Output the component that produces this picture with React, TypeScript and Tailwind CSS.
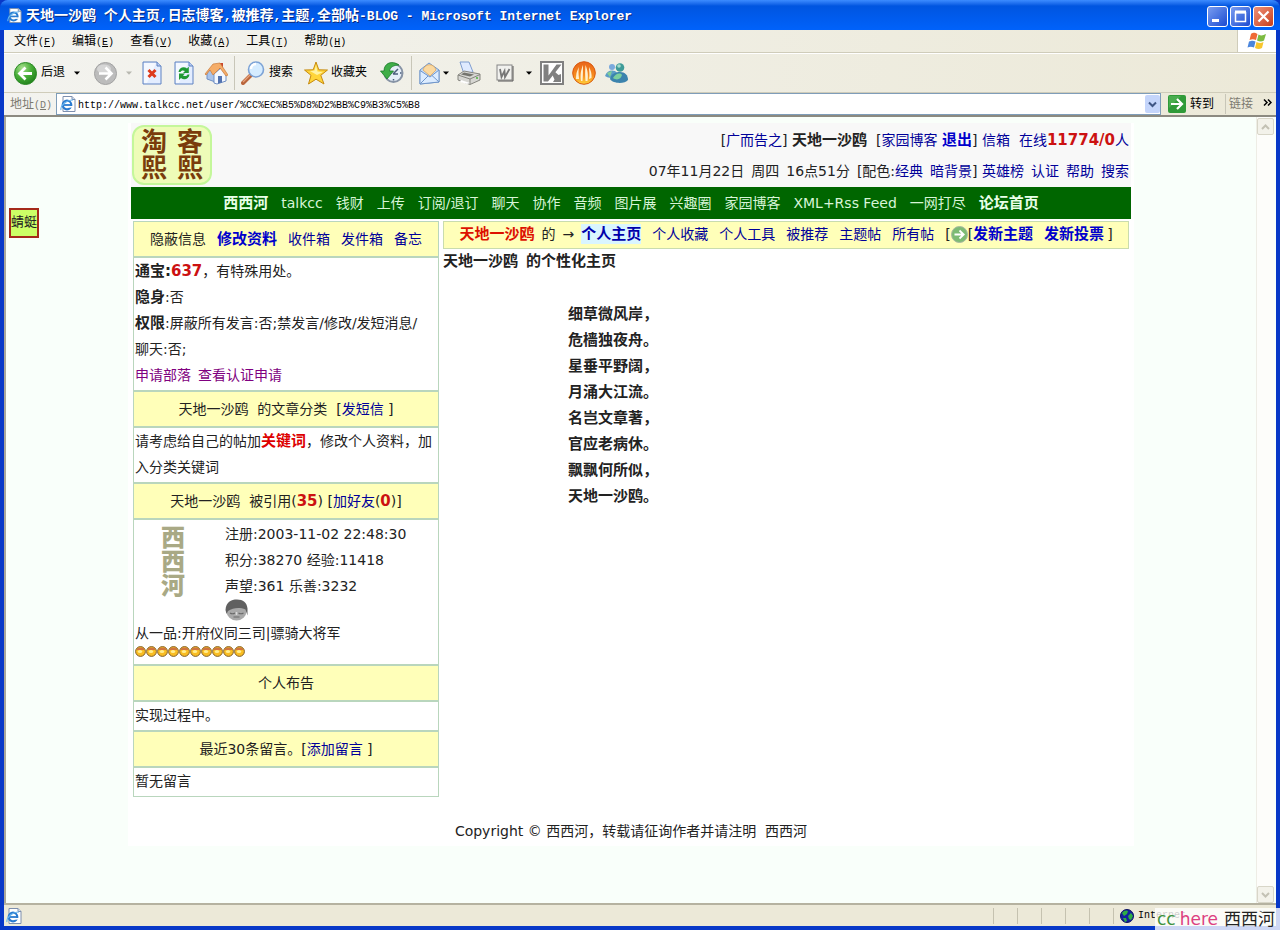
import React from "react";

type Kids = { children?: React.ReactNode };

function A({ children, className = "text-[#000099]" }: Kids & { className?: string }) {
  return (
    <a href="#" className={className}>
      {children}
    </a>
  );
}

function BoldA({ children }: Kids) {
  return (
    <a href="#" className="text-[15px] font-bold text-[#0000cc]">
      {children}
    </a>
  );
}

function B({ children, className = "" }: Kids & { className?: string }) {
  return <b className={`text-[15px] font-bold ${className}`}>{children}</b>;
}

function Num({ children }: Kids) {
  return <b className="text-[15px] font-bold text-[#cc1111]">{children}</b>;
}

function IEIcon({ size = 16 }: { size?: number }) {
  return (
    <svg width={size} height={size} viewBox="0 0 16 16" className="shrink-0">
      <path d="M3 .5h9l3 3v12H3z" fill="#fff" stroke="#7d8fae" />
      <path d="M12 .5v3h3" fill="#cfdcf0" stroke="#7d8fae" />
      <circle cx="7" cy="9" r="4.3" fill="none" stroke="#2a7bd0" strokeWidth="2.2" />
      <path d="M3 9h8.5" stroke="#2a7bd0" strokeWidth="1.8" />
      <path d="M9 10.8h4" stroke="#fff" strokeWidth="1.6" />
      <path d="M1 14C0 10 6 4 13 4" fill="none" stroke="#65b4ee" strokeWidth="1.2" />
    </svg>
  );
}

function Caret({ dim = false }: { dim?: boolean }) {
  return (
    <svg width="6" height="4" viewBox="0 0 6 4" className="shrink-0">
      <path d="M0 .5h6L3 3.8z" fill={dim ? "#b8b8b0" : "#000"} />
    </svg>
  );
}

function BackIcon() {
  return (
    <svg width="23" height="23" viewBox="0 0 23 23">
      <defs>
        <radialGradient id="back" cx=".35" cy=".25" r=".85">
          <stop offset="0" stopColor="#a6e08c" />
          <stop offset=".5" stopColor="#46ad36" />
          <stop offset="1" stopColor="#1b7a18" />
        </radialGradient>
      </defs>
      <circle cx="11.5" cy="11.5" r="11" fill="url(#back)" stroke="#2c8a26" />
      <path d="M18 11.5H6M11.5 5.5l-6 6 6 6" fill="none" stroke="#fff" strokeWidth="2.8" />
    </svg>
  );
}

function ForwardIcon() {
  return (
    <svg width="23" height="23" viewBox="0 0 23 23">
      <circle cx="11.5" cy="11.5" r="11" fill="#bcbcbc" stroke="#a2a2a2" />
      <ellipse cx="10" cy="7" rx="7" ry="4.5" fill="#d6d6d6" />
      <path d="M5 11.5h12M11.5 5.5l6 6-6 6" fill="none" stroke="#fff" strokeWidth="2.6" />
    </svg>
  );
}

function Sheet({ children }: Kids) {
  return (
    <svg width="20" height="24" viewBox="0 0 20 24">
      <path d="M1 1h14l4 4v18H1z" fill="#e3edff" stroke="#5f82c2" />
      <path d="M2 2h12l-9 20H2z" fill="#fff" opacity=".6" />
      <path d="M15 1v4h4" fill="#b9cdf2" stroke="#5f82c2" />
      {children}
    </svg>
  );
}

function HomeIcon() {
  return (
    <svg width="24" height="24" viewBox="0 0 24 24">
      <path d="M15 2h4v6h-4z" fill="#c9472c" />
      <path d="M3 12l6-7 5 8v9l-11-4z" fill="#a9c3ea" stroke="#7190c4" />
      <path d="M10 13l7-6 5 7v6l-9 3-3-1z" fill="#f4f8ff" stroke="#7190c4" />
      <path d="M14 15h4v6.500l-4 1z" fill="#5373b0" />
      <path d="M1 13L9 3l7-1 8 12-2 1-6-8-7 7-3-5-4 5z" fill="#f5ad68" stroke="#c97a3c" strokeWidth=".7" />
    </svg>
  );
}

function SearchIcon() {
  return (
    <svg width="25" height="24" viewBox="0 0 25 24">
      <path d="M2 22l8-8" stroke="#b9653c" strokeWidth="4" strokeLinecap="round" />
      <path d="M2 21l7-7" stroke="#e9a37c" strokeWidth="1.2" />
      <circle cx="15" cy="8.500" r="7.500" fill="#d5ecff" stroke="#7da3d6" strokeWidth="1.600" />
      <path d="M10 8a5 5 0 0 1 5-5" stroke="#fff" strokeWidth="2.400" fill="none" />
    </svg>
  );
}

function StarIcon() {
  return (
    <svg width="24" height="24" viewBox="0 0 24 24">
      <path d="M12 1l2.800 7.800 8.700.2-6.700 5.300 3.200 8.700-8-4.800-7.500 4.800 2.500-8.700L.5 9l8.700-.2z" fill="#ffd53a" stroke="#c68a10" />
      <path d="M12 4l1.500 6.500 5.500.5-6 3-7-4 4.500-.5z" fill="#fff3a4" />
    </svg>
  );
}

function HistoryIcon() {
  return (
    <svg width="24" height="24" viewBox="0 0 24 24">
      <circle cx="13.500" cy="12" r="9" fill="#e6eef8" stroke="#8793a5" strokeWidth="2" />
      <path d="M13 13l5-5M13 13h5M13.500 18v1.500M20 12h1.500" stroke="#4b5e7c" strokeWidth="1.500" />
      <path d="M19 4C12-1 4 2 4 10H.5L7 18l6.500-8H9.500C10 6 14 4 19 4z" fill="#3fae48" stroke="#1c7a2c" strokeWidth=".8" />
    </svg>
  );
}

function MailIcon() {
  return (
    <svg width="21" height="24" viewBox="0 0 21 24">
      <path d="M1 9l9-7 10 7v12L1 23z" fill="#c4dcf8" stroke="#7096ca" />
      <path d="M4 9c2-7 11-7 13 0l-6 6z" fill="#fbd9a0" stroke="#dda252" strokeWidth=".7" />
      <path d="M1 9.500l10 6.500 9-7v12L1 23z" fill="#dcecff" stroke="#7096ca" />
      <path d="M1 23l8-8M20 21l-7-6.500" stroke="#7096ca" />
    </svg>
  );
}

function PrinterIcon() {
  return (
    <svg width="24" height="24" viewBox="0 0 24 24">
      <path d="M3 1h9l4 10-9 2z" fill="#dfeaff" stroke="#7f9dcf" />
      <path d="M1 14l6-4 16 3v6l-10 4.500L1 19z" fill="#d6d6d2" stroke="#85857f" />
      <path d="M1 14l12 4 10-4.500M13 18v5" fill="none" stroke="#85857f" />
      <path d="M7 11.500l10 2-4 2-9-2z" fill="#74746e" />
      <path d="M4 19l9 3-3 1-7-2z" fill="#fff" />
      <circle cx="20" cy="17" r="1" fill="#4bb53d" />
    </svg>
  );
}

function WordIcon() {
  return (
    <svg width="18" height="18" viewBox="0 0 18 18">
      <rect x="1" y="1" width="15" height="15" fill="#f1f1ee" stroke="#858585" />
      <path d="M2 17h15V2" fill="none" stroke="#555" />
      <path d="M4 5l1.500 8 3-6 .5 6L13.500 5" fill="none" stroke="#777" strokeWidth="1.800" />
    </svg>
  );
}

function KIcon() {
  return (
    <svg width="24" height="24" viewBox="0 0 24 24">
      <rect x="1" y="1" width="22" height="22" fill="#fff" stroke="#808080" strokeWidth="2" />
      <path d="M3.500 3.500h5v11l8-11h5L8 20.500H3.500z" fill="#808080" />
      <path d="M12 13l2.500-2.500 4 3.500 2.500-1v8h-8l1.500-2.500z" fill="#808080" />
    </svg>
  );
}

function FlameIcon() {
  return (
    <svg width="24" height="24" viewBox="0 0 24 24">
      <defs>
        <linearGradient id="fl" x1="0" y1="0" x2="0" y2="1">
          <stop offset="0" stopColor="#e9641a" />
          <stop offset=".6" stopColor="#f68b1e" />
          <stop offset="1" stopColor="#ffd23c" />
        </linearGradient>
      </defs>
      <circle cx="12" cy="12" r="11.300" fill="url(#fl)" stroke="#d8580f" />
      <path d="M4 18c0-6 1-8 3-12-1 6 0 9 0 12M9 20c-1-7 0-11 2-16 0 6 0 11-.5 16M13.500 20c-.5-6-.5-10 0-16 2 5 3 9 2 16M17 18c1-4 0-7 0-12 2 4 3 7 2.500 11" fill="#fff0cf" />
    </svg>
  );
}

function BuddiesIcon() {
  return (
    <svg width="25" height="24" viewBox="0 0 25 24">
      <circle cx="8" cy="6" r="3" fill="#7aa9dc" />
      <path d="M1 15c2-6 9-7 12-3l-3 5c-3 0-6 0-9-2z" fill="#5b9dc8" />
      <path d="M3 12l5-2-2 6z" fill="#82cf94" />
      <circle cx="16" cy="6.500" r="4.300" fill="#3e9b98" />
      <circle cx="15" cy="5" r="1.800" fill="#a5dccc" />
      <path d="M6 18c1-5 5-7 10-7s8 3 8 8c-3 4-15 4-18-1z" fill="#3c83ad" />
      <path d="M9 17c2-4 7-6 9-3-1 4-5 6-9 3z" fill="#7ccf9e" />
    </svg>
  );
}

function WindowsFlag() {
  return (
    <svg width="20" height="18" viewBox="0 0 20 18">
      <path d="M4 2c3-2 4-1 6.500 0L9 8C6.500 7 5 7 2.500 8z" fill="#ef6a35" />
      <path d="M11.500 2.500C14 4 16 3.500 19 2l-2 6.500C14.500 10 12.500 9.500 10 8.500z" fill="#7dbb42" />
      <path d="M2 9.500c3-1 4-1 6.500 0L7 15.500c-2.500-1-4-1-6.500 0z" fill="#4b86dd" />
      <path d="M9.500 10c2.500 1 4 1.500 7 0L15 16c-3 1.500-4.500 1-7 0z" fill="#f8c62e" />
    </svg>
  );
}

function GlobeIcon() {
  return (
    <svg width="14" height="14" viewBox="0 0 14 14" className="shrink-0">
      <circle cx="7" cy="7" r="6.500" fill="#1420a0" stroke="#0a1160" />
      <path d="M2 4c2-3 5-3 6-2L7 5 4 7zM8 7l3-3 2 3-2 4-2-1zM3 9l3 0 1 3-2 1z" fill="#2fae44" />
    </svg>
  );
}

function Face() {
  return (
    <svg width="23" height="22" viewBox="0 0 23 22" className="ml-[90px] block">
      <ellipse cx="11.500" cy="12" rx="10" ry="9.500" fill="#a9a9a9" />
      <path d="M.5 11C1 3 6 .5 12 .5s10 3 10.500 9v7l-2-6C14 8 8 9 3 12l-1.500 3z" fill="#606060" />
      <path d="M5 14q2.500 1.500 5 0M13.500 14q2.500 1.500 5 0M8.500 18h6" fill="none" stroke="#6a6a6a" strokeWidth="1.200" />
      <path d="M11.500 13v3" stroke="#d8d8d8" strokeWidth="1.500" />
    </svg>
  );
}

function Ball() {
  return (
    <svg width="11" height="11" viewBox="0 0 11 11">
      <circle cx="5.500" cy="5.500" r="4.900" fill="#f9bd22" stroke="#80602c" />
      <path d="M1.500 4C2.500 .8 8.500 .8 9.500 4z" fill="#cf7440" />
      <ellipse cx="5" cy="5.500" rx="2.200" ry="1.600" fill="#ffee90" />
    </svg>
  );
}

function ArrowBall() {
  return (
    <svg width="17" height="17" viewBox="0 0 17 17" className="mt-1">
      <circle cx="8.500" cy="8.500" r="8" fill="#7dbb74" stroke="#a8b8a0" />
      <path d="M3.500 8.500h9M8.500 4.500l4.200 4-4.200 4" fill="none" stroke="#fff" strokeWidth="1.800" />
    </svg>
  );
}

const menus = [
  ["文件", "F"],
  ["编辑", "E"],
  ["查看", "V"],
  ["收藏", "A"],
  ["工具", "T"],
  ["帮助", "H"],
];

const navItems = ["talkcc", "钱财", "上传", "订阅/退订", "聊天", "协作", "音频", "图片展", "兴趣圈", "家园博客", "XML+Rss Feed", "一网打尽"];

const poem = ["细草微风岸，", "危樯独夜舟。", "星垂平野阔，", "月涌大江流。", "名岂文章著，", "官应老病休。", "飘飘何所似，", "天地一沙鸥。"];

function TitleBar() {
  return (
    <header className="flex h-[30px] items-center rounded-t-lg bg-linear-to-b from-[#3c8cff] via-[#0055e0] via-20% to-[#0062fb] pr-[6px] pl-[7px] text-white">
      <IEIcon size={15} />
      <h1 className="ml-1 flex-1 pt-[3px] text-[14px] leading-5 font-bold whitespace-pre [text-shadow:1px_1px_0_#0a2a80]">
        天地一沙鸥<span className="text-[13px]"> </span>个人主页<span className="text-[13px]">,</span>日志博客
        <span className="text-[13px]">,</span>被推荐<span className="text-[13px]">,</span>主题<span className="text-[13px]">,</span>全部帖
        <span className="text-[13px]">-BLOG - Microsoft Internet Explorer</span>
      </h1>
      <div className="flex gap-[2px] pt-[3px]">
        <button aria-label="最小化" className="h-[21px] w-[21px] rounded-[3px] border border-white bg-linear-to-br from-[#7a9cf0] to-[#1c48d0]">
          <svg width="19" height="19" viewBox="0 0 19 19"><path d="M4 13.500h7" stroke="#fff" strokeWidth="3" /></svg>
        </button>
        <button aria-label="最大化" className="h-[21px] w-[21px] rounded-[3px] border border-white bg-linear-to-br from-[#7a9cf0] to-[#1c48d0]">
          <svg width="19" height="19" viewBox="0 0 19 19"><path d="M4.500 5v9.500h10V5M4 5.500h11" fill="none" stroke="#fff" strokeWidth="1.500" /><path d="M4 5h11" stroke="#fff" strokeWidth="3" /></svg>
        </button>
        <button aria-label="关闭" className="h-[21px] w-[21px] rounded-[3px] border border-white bg-linear-to-br from-[#ee9078] to-[#c83c14]">
          <svg width="19" height="19" viewBox="0 0 19 19"><path d="M4.500 4.500l10 10m0-10l-10 10" stroke="#fff" strokeWidth="2.200" /></svg>
        </button>
      </div>
    </header>
  );
}

function Toolbar() {
  return (
    <div className="flex h-10 items-center border-b border-[#cfccba] border-t border-t-white text-[12px] text-black">
      <button className="ml-[10px] flex items-center gap-1"><BackIcon />后退</button>
      <button aria-label="后退列表" className="ml-[9px]"><Caret /></button>
      <button aria-label="前进" className="ml-[14px]"><ForwardIcon /></button>
      <button aria-label="前进列表" className="ml-[9px]"><Caret dim /></button>
      <button aria-label="停止" className="ml-[10px]">
        <Sheet><path d="M6.500 9l7 7m0-7l-7 7" stroke="#dd3a1c" strokeWidth="3" /></Sheet>
      </button>
      <button aria-label="刷新" className="ml-3">
        <Sheet>
          <path d="M4.500 11C5 6.500 10 5 13 7.500l1.800-2V12H9l2-2C9 8.800 7 9.500 6.500 11z" fill="#1f9a35" />
          <path d="M15.500 13.500C15 18 10 19.500 7 17l-2 2v-6.500h6l-2 2c2 1.200 4 .5 4.500-1z" fill="#1f9a35" />
        </Sheet>
      </button>
      <button aria-label="主页" className="ml-[10px]"><HomeIcon /></button>
      <span className="ml-[6px] h-[34px] w-px bg-[#c8c6b8]" />
      <button className="ml-[6px] flex items-center gap-[3px]"><SearchIcon />搜索</button>
      <button className="ml-[11px] flex items-center gap-[3px]"><StarIcon />收藏夹</button>
      <button aria-label="历史" className="ml-[13px]"><HistoryIcon /></button>
      <span className="ml-[7px] h-[34px] w-px bg-[#c8c6b8]" />
      <button aria-label="邮件" className="ml-[7px] flex items-center gap-[3px]"><MailIcon /><Caret /></button>
      <button aria-label="打印" className="ml-2"><PrinterIcon /></button>
      <button aria-label="编辑" className="ml-[15px] flex items-center gap-3"><WordIcon /><Caret /></button>
      <button aria-label="卡巴斯基" className="ml-2"><KIcon /></button>
      <button aria-label="迅雷" className="ml-2"><FlameIcon /></button>
      <button aria-label="Messenger" className="ml-2"><BuddiesIcon /></button>
    </div>
  );
}

function AddressBar() {
  return (
    <form className="flex h-6 items-center border-b-2 border-[#8c8a80] text-[12px] text-black" onSubmit={(e) => e.preventDefault()}>
      <label htmlFor="addr" className="ml-[6px] pt-[2px] text-[#7c7a70]">
        地址<span className="text-[10px]">(<u>D</u>)</span>
      </label>
      <div className="ml-1 flex h-[22px] flex-1 items-center border border-[#7f9db9] bg-white pl-[3px]">
        <IEIcon />
        <input
          id="addr"
          className="ml-[2px] h-5 min-w-0 flex-1 bg-transparent pt-[2px] text-[10px] outline-none"
          defaultValue="http://www.talkcc.net/user/%CC%EC%B5%D8%D2%BB%C9%B3%C5%B8"
        />
        <button type="button" aria-label="展开地址" className="flex h-[18px] w-[15px] items-center justify-center rounded-xs bg-[#c4d5fb]">
          <svg width="9" height="7" viewBox="0 0 9 7"><path d="M1 1.500l3.500 3.500L8 1.500" fill="none" stroke="#3f5685" strokeWidth="2" /></svg>
        </button>
      </div>
      <button className="ml-[7px] flex items-center gap-1">
        <svg width="18" height="18" viewBox="0 0 18 18">
          <rect width="18" height="18" rx="2" fill="#2f9a38" />
          <path d="M1 1h12L1 13z" fill="#5dbb5f" opacity=".6" />
          <path d="M3 9h11M9 4l5 5-5 5" fill="none" stroke="#fff" strokeWidth="2.200" />
        </svg>
        <span className="pt-[2px]">转到</span>
      </button>
      <span className="ml-[11px] h-5 w-px bg-[#c8c6b8]" />
      <span className="ml-[3px] pt-[2px] text-[#7c7a70]">链接</span>
      <button type="button" aria-label="更多" className="mr-1 ml-[10px] pb-1">
        <svg width="9" height="7" viewBox="0 0 9 7"><path d="M1 .5l3 3-3 3M5 .5l3 3-3 3" fill="none" stroke="#000" strokeWidth="1.500" /></svg>
      </button>
    </form>
  );
}

function Head({ children }: Kids) {
  return <h2 className="flex h-9 items-center justify-center border-b-2 border-[#b9d6bd] bg-[#ffffb9] whitespace-pre">{children}</h2>;
}

function Block({ children }: Kids) {
  return <div className="border-b-2 border-[#b9d6bd] pb-[2px] pl-px last:border-b">{children}</div>;
}

function Sidebar() {
  return (
    <aside className="w-[306px] shrink-0 self-start border border-b-0 border-[#b9d6bd] bg-white">
      <Head>
        <span className="flex gap-[11px]">
          <span>隐蔽信息</span>
          <BoldA>修改资料</BoldA>
          <A>收件箱</A>
          <A>发件箱</A>
          <A>备忘</A>
        </span>
      </Head>
      <Block>
        <p><B>通宝:</B><Num>637</Num>，有特殊用处。</p>
        <p><B>隐身</B>:否</p>
        <p><B>权限</B>:屏蔽所有发言:否;禁发言/修改/发短消息/<br />聊天:否;</p>
        <p className="flex gap-[7px]">
          <A className="text-[#800080]">申请部落</A>
          <A className="text-[#800080]">查看认证申请</A>
        </p>
      </Block>
      <Head>天地一沙鸥  的文章分类  [<A>发短信</A> ]</Head>
      <Block>
        <p>请考虑给自己的帖加<B className="text-[#dd0000]">关键词</B>，修改个人资料，加<br />入分类关键词</p>
      </Block>
      <Head>天地一沙鸥  被引用(<Num>35</Num>) [<A>加好友</A>(<Num>0</Num>)]</Head>
      <Block>
        <div className="flex h-[79px] pt-px">
          <div className="ml-[26px] flex w-[64px] flex-col pt-[5px] text-[24px] leading-[24px] font-black text-[#a9a985]">
            <span>西</span>
            <span>西</span>
            <span>河</span>
          </div>
          <div>
            <p>注册:2003-11-02 22:48:30</p>
            <p>积分:38270 经验:11418</p>
            <p>声望:361 乐善:3232</p>
          </div>
        </div>
        <Face />
        <p className="leading-6">从一品:开府仪同三司|骠骑大将军</p>
        <div className="flex h-[17px] pt-px">
          {Array.from({ length: 10 }, (_, i) => (
            <Ball key={i} />
          ))}
        </div>
      </Block>
      <Head>个人布告</Head>
      <Block><p>实现过程中。</p></Block>
      <Head>最近30条留言。[<A>添加留言</A> ]</Head>
      <Block><p>暂无留言</p></Block>
    </aside>
  );
}

function Page() {
  return (
    <div className="mx-auto mt-[6px] max-w-[1006px] bg-white px-[3px] text-[14px] leading-[26px] text-[#222] [font-family:'DejaVu_Sans','Noto_Sans_CJK_SC',sans-serif]">
      <div className="flex justify-between bg-[#f8f8f8] pt-[2px] pr-[2px] pl-px">
        <div className="grid h-[60px] w-20 grid-cols-2 content-center justify-items-center gap-x-1 rounded-xl border-2 border-[#c4f79a] bg-[#eefcb8] px-1 text-[26px] leading-[26px] font-bold text-[#7a3c0c]">
          <span>淘</span>
          <span>客</span>
          <span>熙</span>
          <span>熙</span>
        </div>
        <div className="flex flex-col items-end leading-[31px]">
          <div className="flex gap-[9px]">
            <span>[<A>广而告之</A>] <B>天地一沙鸥</B></span>
            <span>[<A>家园博客</A> <BoldA>退出</BoldA>] <A>信箱</A></span>
            <span><A>在线</A><Num>11774/0</Num><A>人</A></span>
          </div>
          <div className="flex gap-[7px]">
            <span>07年11月22日</span>
            <span>周四</span>
            <span>16点51分</span>
            <span>[配色:<A>经典</A></span>
            <span><A>暗背景</A>] <A>英雄榜</A></span>
            <A>认证</A>
            <A>帮助</A>
            <A>搜索</A>
          </div>
        </div>
      </div>
      <nav className="flex h-8 items-center justify-center gap-[13px] bg-[#006600] text-[#d8f5d8]">
        <A className="text-[15px] font-bold text-[#e8ffe8]">西西河</A>
        {navItems.map((n) => (
          <A key={n} className="text-[#d8f5d8]">{n}</A>
        ))}
        <A className="text-[15px] font-bold text-[#e8ffe8]">论坛首页</A>
      </nav>
      <div className="flex gap-1 px-[2px] pt-[2px]">
        <Sidebar />
        <main className="min-w-0 flex-1">
          <div className="flex h-7 justify-center gap-[11px] border border-[#c9dcae] bg-[#ffffb9] leading-6">
            <span className="flex gap-[7px]">
              <B className="text-[#dd1100]">天地一沙鸥</B>
              <span>的</span>
              <span>→</span>
              <a href="#" className="mt-[2px] self-start bg-[#d9f5ff] text-[15px] leading-5 font-bold text-[#0000aa]">个人主页</a>
            </span>
            <A>个人收藏</A>
            <A>个人工具</A>
            <A>被推荐</A>
            <A>主题帖</A>
            <A>所有帖</A>
            <span className="flex">
              [<ArrowBall />[<BoldA>发新主题</BoldA>
            </span>
            <span className="flex gap-[3px]"><BoldA>发新投票</BoldA>]</span>
          </div>
          <h2 className="flex gap-2 text-[15px] font-bold leading-6">
            <span>天地一沙鸥</span>
            <span>的个性化主页</span>
          </h2>
          <div className="mt-7 ml-[125px] text-[15px] font-bold">
            {poem.map((l) => (
              <p key={l}>{l}</p>
            ))}
          </div>
        </main>
      </div>
      <footer className="pt-[21px] pb-[2px] text-center">
        Copyright © 西西河，转载请征询作者并请注明&nbsp; 西西河
      </footer>
    </div>
  );
}

export default function App() {
  return (
    <div className="relative flex min-h-screen flex-col bg-[#0838c8] [font-family:'Liberation_Mono','Noto_Sans_CJK_SC',monospace]">
      <TitleBar />
      <div className="mx-1 mb-1 flex flex-1 flex-col bg-linear-to-r from-[#f3f3ef] to-[#ece9d8]">
        <div className="flex h-[23px] items-center border-b border-[#cfccba] text-[12px] text-black">
          <nav className="flex flex-1 gap-4 pt-[2px] pl-[10px]">
            {menus.map(([t, k]) => (
              <button key={k} className="leading-5">
                {t}<span className="text-[10px]">(<u>{k}</u>)</span>
              </button>
            ))}
          </nav>
          <div className="flex h-[22px] w-[39px] items-center justify-center border-l border-[#cfccba] bg-white">
            <WindowsFlag />
          </div>
        </div>
        <Toolbar />
        <AddressBar />
        <div className="flex flex-1 border-l-2 border-[#a9a79c] bg-[#f9fffa]">
          <div className="min-w-0 flex-1">
            <Page />
          </div>
          <div className="mr-[2px] flex w-[18px] flex-col justify-between border-l border-[#eeede5] bg-[#fdfdfa] pt-px">
            <button aria-label="向上滚动" className="flex h-[17px] items-center justify-center rounded-xs border border-[#d8d6c8] bg-[#f3f2ea]">
              <svg width="9" height="6" viewBox="0 0 9 6"><path d="M1 5l3.500-3.500L8 5" fill="none" stroke="#c3c1b4" strokeWidth="2" /></svg>
            </button>
            <button aria-label="向下滚动" className="flex h-[17px] items-center justify-center rounded-xs border border-[#d8d6c8] bg-[#f3f2ea]">
              <svg width="9" height="6" viewBox="0 0 9 6"><path d="M1 1l3.500 3.500L8 1" fill="none" stroke="#c3c1b4" strokeWidth="2" /></svg>
            </button>
          </div>
        </div>
        <footer className="flex h-[23px] items-center border-t-2 border-[#b5b2a0] bg-[#ece9d8] text-[10px] text-black">
          <span className="flex-1 pl-[2px]"><IEIcon /></span>
          {[0, 1, 2, 3, 4].map((i) => (
            <span key={i} className="h-4 w-6 border-l border-[#c5c2b0]" />
          ))}
          <span className="flex h-4 w-[163px] items-center gap-1 border-l border-[#c5c2b0] pl-[6px]">
            <GlobeIcon />
            Internet
          </span>
        </footer>
      </div>
      <div className="absolute top-[208px] left-[9px] flex h-[30px] w-[30px] items-center justify-center border-2 border-[#a52a1a] bg-[#ccff66] text-[13px] leading-5 whitespace-nowrap text-[#222]">
        蜻蜓
      </div>
      <div className="absolute right-0 bottom-0 flex h-[22px] w-[125px] items-center gap-1 bg-white/80 pl-[2px] text-[17px] leading-5 [font-family:'DejaVu_Sans','Noto_Sans_CJK_SC',sans-serif]">
        <span className="text-[#3d9140]">cc</span>
        <span className="text-[#dd3f80]">here</span>
        <span className="ml-[2px] text-[#222]">西西河</span>
      </div>
    </div>
  );
}
